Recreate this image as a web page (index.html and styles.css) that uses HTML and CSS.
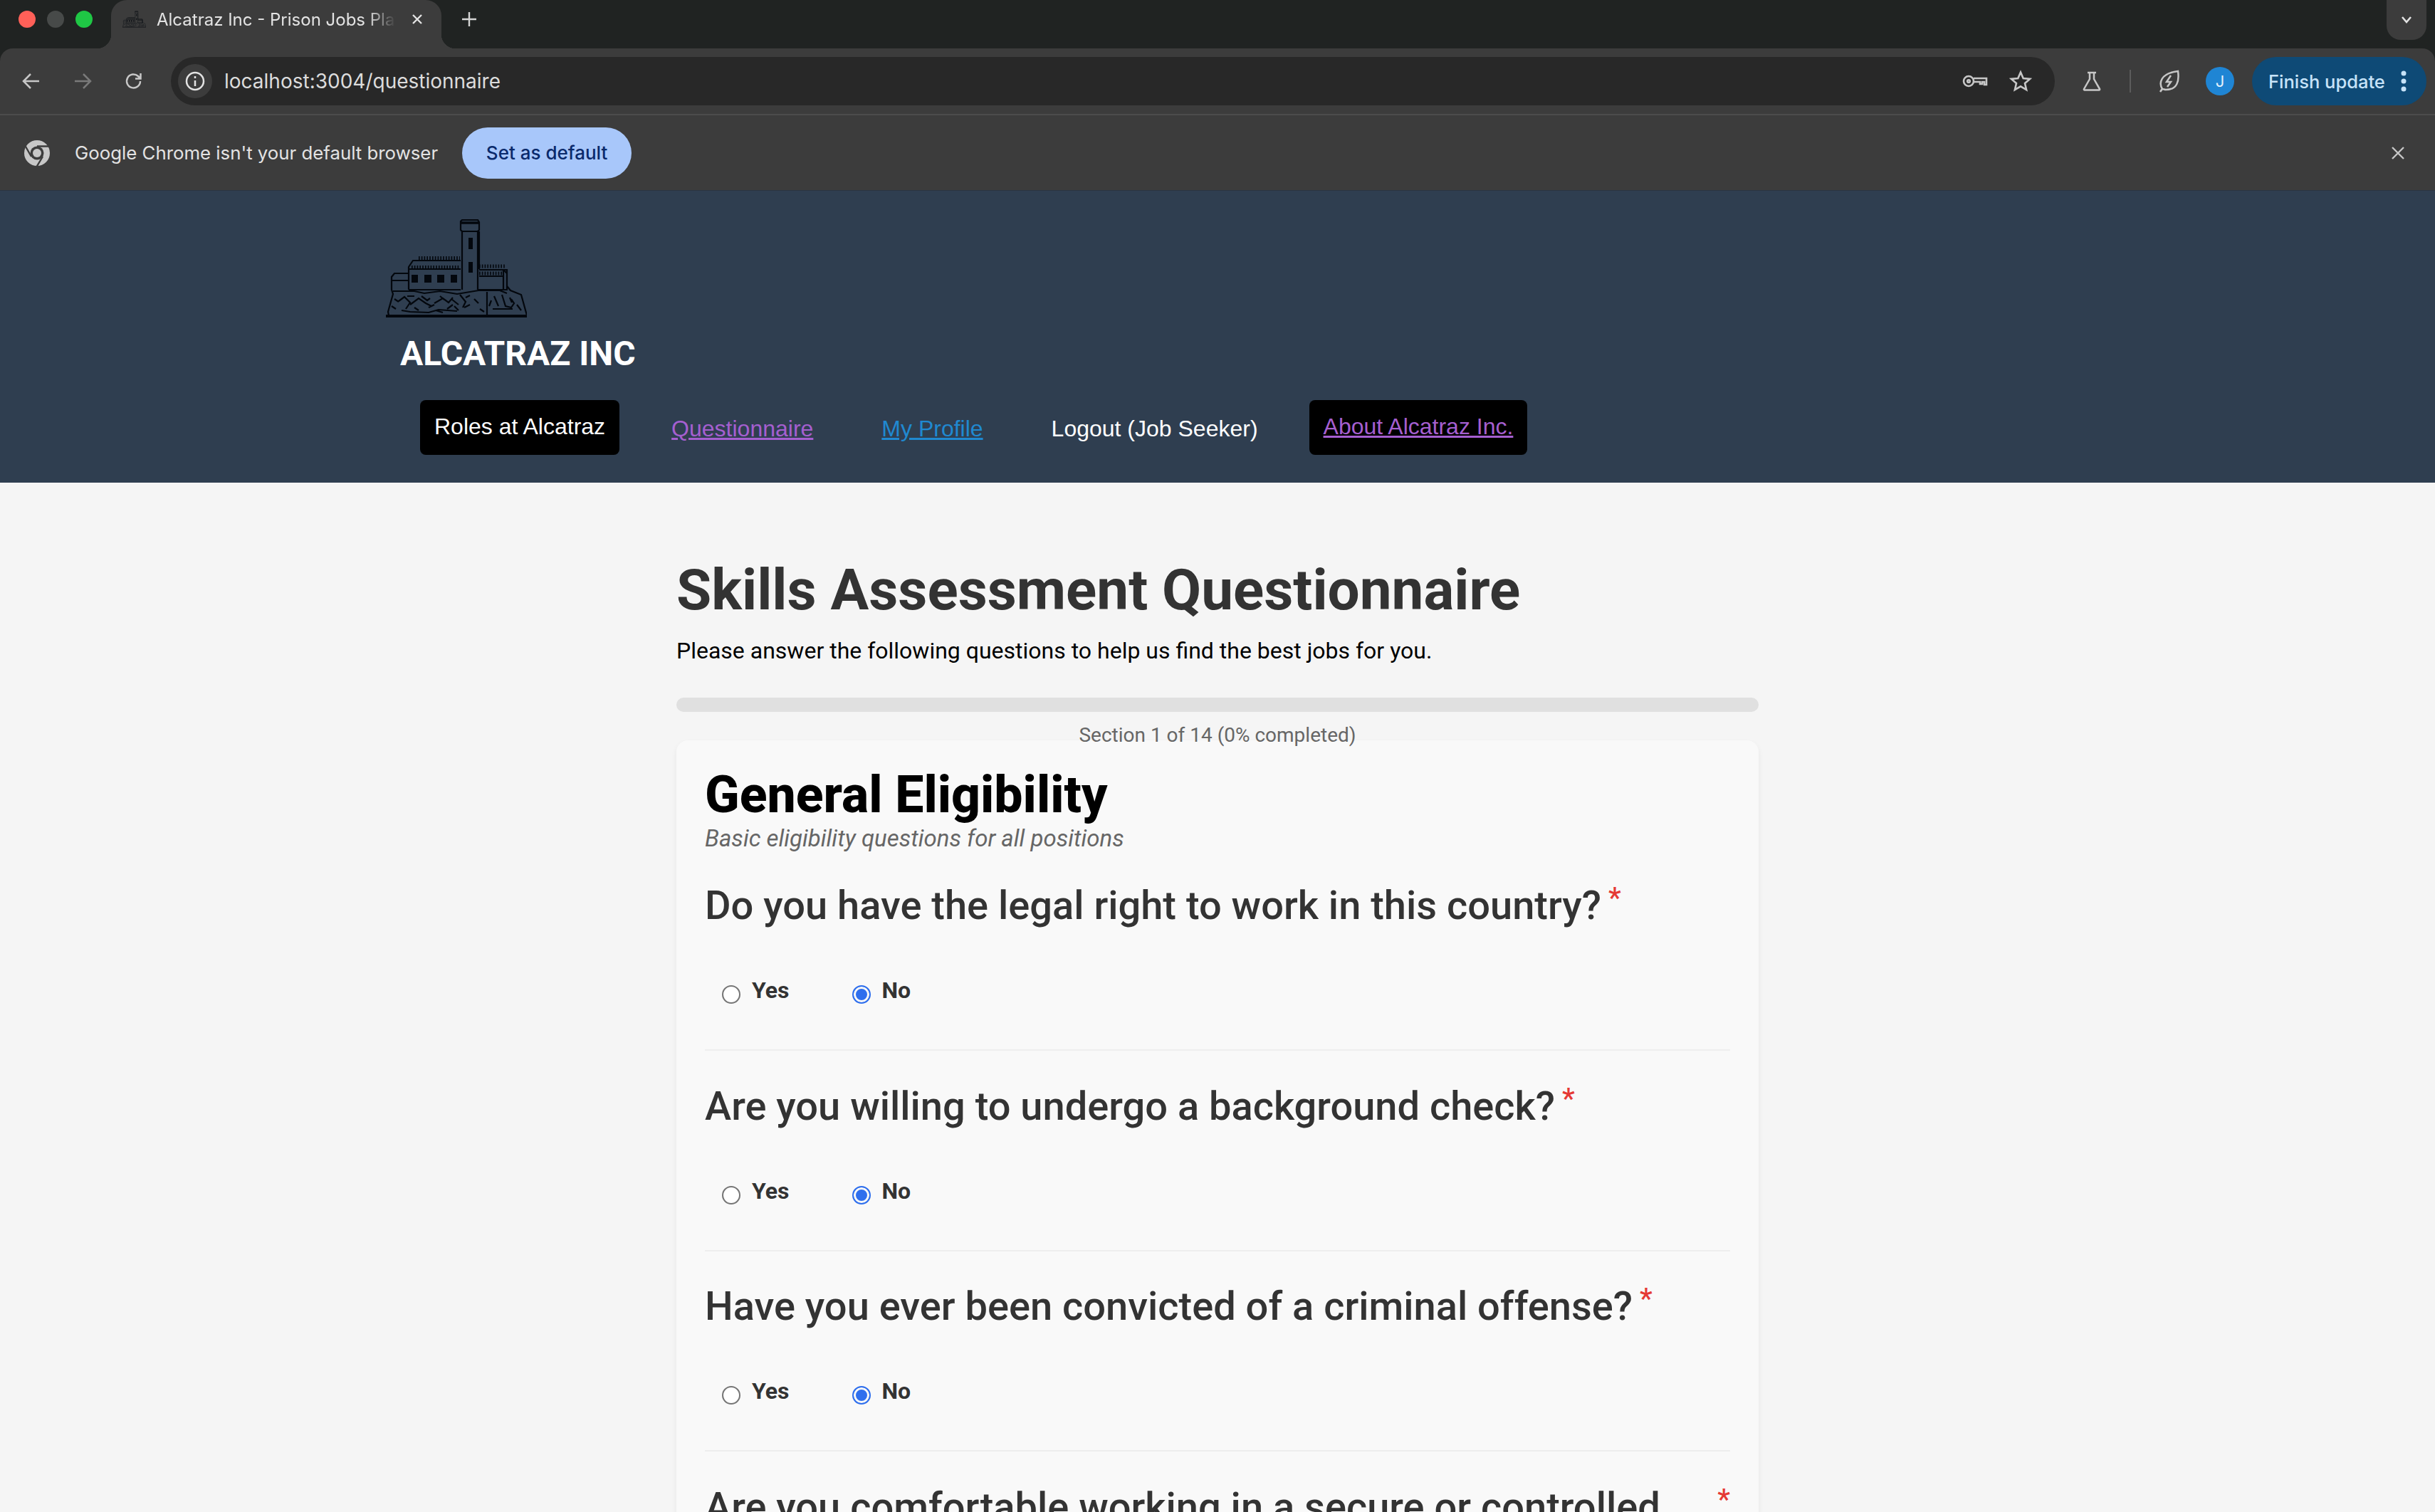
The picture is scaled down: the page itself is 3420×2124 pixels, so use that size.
FILE: index.html
```html
<!DOCTYPE html>
<html lang="en">
  <head>
    <meta charset="UTF-8" />
    <title>Alcatraz Inc - Prison Jobs Platform</title>
    <link rel="stylesheet" href="styles.css">
  </head>
  <body>
    <svg class="defs" width="0" height="0">
      <symbol id="fort" viewBox="0 0 198 138">
        <g fill="none" stroke="#03070d" stroke-width="2.200">
          <path d="M107 1h22l2 3v11l-2 2h-22l-2-2V3z" />
          <path d="M105 5h26" stroke-width="3.500" />
          <path d="M107 17v82M129 17v82M131 17v53" />
          <path d="M32 99V67l6-9h67M32 70h73" />
          <path d="M46 55h58M36 68h68" stroke-width="6" stroke-dasharray="1.600 2.200" />
          <path d="M32 99h73" />
          <path d="M8 99V81l4-5h20M8 86h24" />
          <path d="M131 71h39v28h-41M165 71l5 5v23M131 80h34M165 72v27" />
          <path d="M131 66h38M131 76h32" stroke-width="5" stroke-dasharray="1.600 2.200" />
          <path d="M8 99l2 6-7 25 1 5M170 94l5 6 15 6 8 29" />
          <path d="M10 101h30l14 3 22-3 24 4 30-5h30l10 4" />
          <path d="M142 102v33M18 115l8-6 8 8-6 9M34 120l12-9 10 7 8 4M50 108l8 6 4-3M68 118l12-7 8 6 6-7M92 112l10 8M104 106l8 10-4 8M118 120l-8 4M152 108l6 14M163 106l5 16 8 2 4-6-4-6M150 126h28M22 128l12 2 26 1 14-4 26 2M184 120l6 8M8 122l6 4M124 112l6 6M30 108h10M60 124l8-4M76 108l6 5M86 126l8-6M12 112l6 4M40 124l6 4M96 122l6 6M112 110l6-3M132 126l6 4M148 114l-3 8M174 110l3 7M70 128l10 3" />
          <path d="M0 136h198" stroke-width="3.800" />
        </g>
        <g fill="#03070d">
          <rect x="116" y="26" width="6" height="16" />
          <rect x="116" y="60" width="6" height="15" />
          <rect x="36" y="78" width="9" height="11" />
          <rect x="54" y="78" width="10" height="11" />
          <rect x="72" y="78" width="10" height="11" />
          <rect x="91" y="78" width="9" height="11" />
        </g>
      </symbol>
    </svg>

    <div class="browser">
      <!-- Browser tab strip -->
      <div class="tabstrip">
        <div class="lights">
          <span class="light light-red"></span>
          <span class="light light-off"></span>
          <span class="light light-green"></span>
        </div>
        <div class="tab">
          <svg class="favicon" width="33" height="30"><use href="#fort" /></svg>
          <span class="tab-title">Alcatraz Inc - Prison Jobs Platform</span>
          <svg class="tab-close" width="16" height="16" viewBox="0 0 16 16"><path d="M2 2l12 12M14 2L2 14" /></svg>
        </div>
        <svg class="new-tab" width="22" height="22" viewBox="0 0 22 22"><path d="M11 1v20M1 11h20" /></svg>
        <div class="tab-search">
          <svg width="16" height="12" viewBox="0 0 16 12"><path d="M2 2l6 7 6-7" /></svg>
        </div>
      </div>

      <!-- Toolbar -->
      <div class="toolbar">
        <svg class="tool-icon first-icon" width="28" height="28" viewBox="0 0 28 28"><path d="M25 14H5M13 4L3 14l10 10" /></svg>
        <svg class="tool-icon tool-dim" width="28" height="28" viewBox="0 0 28 28"><path d="M3 14h20M15 4l10 10-10 10" /></svg>
        <svg class="tool-icon" width="28" height="28" viewBox="0 0 28 28"><path d="M23 14a9.500 9.500 0 1 1-3-7l3 3M23.500 3v7.500H16" /></svg>
        <div class="omnibox">
          <span class="site-info">
            <svg width="30" height="30" viewBox="0 0 30 30"><circle cx="15" cy="15" r="12" /><path d="M15 14v8M15 8v3" /></svg>
          </span>
          <span class="url">localhost:3004/questionnaire</span>
          <svg class="omni-icon" width="36" height="22" viewBox="0 0 36 22"><circle cx="9" cy="11" r="7" /><circle cx="9" cy="11" r="1.800" /><path d="M16 7h18v9h-3v-4h-3v3h-3v-3h-9" /></svg>
          <svg class="omni-icon star" width="32" height="32" viewBox="0 0 32 32"><path d="M16 3.500l3.700 8.600 9.300.8-7 6.100 2.100 9.100-8.100-4.800-8.100 4.800 2.100-9.100-7-6.100 9.300-.8z" /></svg>
        </div>
        <svg class="tool-icon flask" width="30" height="30" viewBox="0 0 30 30"><path d="M9 3h12M12 3v9L4 26a1 1 0 0 0 1 1.500h20a1 1 0 0 0 1-1.500l-8-14V3" /></svg>
        <span class="tool-sep"></span>
        <svg class="tool-icon leaf" width="32" height="34" viewBox="0 0 32 34"><path d="M4 32c2-3 3-4 3-4-5-8-3-22 22-25 2 14-1 26-17 26-2 0-3-1-5-1" /><path d="M19 9l-6 9h6l-5 7" /></svg>
        <span class="avatar">J</span>
        <div class="update-btn">
          <span>Finish update</span>
          <svg width="8" height="30" viewBox="0 0 8 30"><circle cx="4" cy="4" r="3.500" /><circle cx="4" cy="15" r="3.500" /><circle cx="4" cy="26" r="3.500" /></svg>
        </div>
      </div>

      <!-- Default browser infobar -->
      <div class="infobar">
        <svg class="chrome-logo" width="38" height="38" viewBox="0 0 38 38">
          <circle cx="19" cy="19" r="18" fill="#c7c7c7" />
          <circle cx="19" cy="19" r="9.500" fill="#3c3c3c" />
          <circle cx="19" cy="19" r="6" fill="#c7c7c7" />
          <path d="M19 9.500h17M11 24L2.500 9M27 24l-8.500 14" fill="none" stroke="#3c3c3c" stroke-width="2.400" />
        </svg>
        <span class="infobar-text">Google Chrome isn't your default browser</span>
        <button class="default-btn">Set as default</button>
        <svg class="infobar-close" width="20" height="20" viewBox="0 0 20 20"><path d="M2 2l16 16M18 2L2 18" /></svg>
      </div>
    </div>

    <!-- Site header -->
    <header class="site-header">
      <svg class="logo" width="198" height="138"><use href="#fort" /></svg>
      <h2 class="brand">ALCATRAZ INC</h2>
      <nav class="site-nav">
        <a class="nav-btn nav-plain-text" href="#">Roles at Alcatraz</a>
        <a class="nav-link nav-purple" href="#">Questionnaire</a>
        <a class="nav-link nav-blue" href="#">My Profile</a>
        <span class="nav-logout">Logout (Job Seeker)</span>
        <a class="nav-btn nav-about" href="#">About Alcatraz Inc.</a>
      </nav>
    </header>

    <main class="content">
      <h1>Skills Assessment Questionnaire</h1>
      <p class="intro">Please answer the following questions to help us find the best jobs for you.</p>
      <div class="progress"></div>
      <p class="progress-text">Section 1 of 14 (0% completed)</p>

      <section class="card">
        <h2 class="section-title">General Eligibility</h2>
        <p class="section-sub">Basic eligibility questions for all positions</p>

        <div class="question">
          <div class="question-label"><span>Do you have the legal right to work in this country?</span><span class="required">*</span></div>
          <div class="options">
            <label class="option"><input type="radio" name="q1" />Yes</label>
            <label class="option"><input type="radio" name="q1" checked />No</label>
          </div>
        </div>

        <div class="question">
          <div class="question-label"><span>Are you willing to undergo a background check?</span><span class="required">*</span></div>
          <div class="options">
            <label class="option"><input type="radio" name="q2" />Yes</label>
            <label class="option"><input type="radio" name="q2" checked />No</label>
          </div>
        </div>

        <div class="question">
          <div class="question-label"><span>Have you ever been convicted of a criminal offense?</span><span class="required">*</span></div>
          <div class="options">
            <label class="option"><input type="radio" name="q3" />Yes</label>
            <label class="option"><input type="radio" name="q3" checked />No</label>
          </div>
        </div>

        <div class="question">
          <div class="question-label"><span>Are you comfortable working in a secure or controlled environment?</span><span class="required">*</span></div>
          <div class="options">
            <label class="option"><input type="radio" name="q4" />Yes</label>
            <label class="option"><input type="radio" name="q4" />No</label>
          </div>
        </div>
      </section>
    </main>
  </body>
</html>
```

FILE: styles.css
```css
/* Page */
html,
body {
  margin: 0;
  height: 2124px;
  overflow: hidden;
}

body {
  background-color: #f5f5f5;
  font-family: Roboto, Arial, sans-serif;
}

.defs {
  position: absolute;
}

.browser {
  background-color: #202322;
}

/* Tab strip */
.tabstrip {
  height: 68px;
  display: flex;
  align-items: flex-start;
}

.lights {
  display: flex;
  gap: 16px;
  padding: 15px 0 0 26px;
}

.light {
  width: 24px;
  height: 24px;
  border-radius: 50%;
}

.light-red {
  background-color: #ff6058;
}

.light-off {
  background-color: #474a49;
}

.light-green {
  background-color: #1fc745;
}

.tab {
  position: relative;
  width: 464px;
  height: 68px;
  margin-left: 26px;
  box-sizing: border-box;
  padding: 0 22px 14px 16px;
  display: flex;
  align-items: center;
  background-color: #3c3c3c;
  border-radius: 22px 22px 0 0;
}

/* little flares at the bottom of the active tab */
.tab::before,
.tab::after {
  content: "";
  position: absolute;
  bottom: 0;
  width: 20px;
  height: 20px;
}

.tab::before {
  left: -20px;
  background: radial-gradient(circle at 0 0, transparent 20px, #3c3c3c 20.5px);
}

.tab::after {
  right: -20px;
  background: radial-gradient(circle at 100% 0, transparent 20px, #3c3c3c 20.5px);
}

.favicon {
  flex-shrink: 0;
}

.tab-title {
  width: 336px;
  margin-left: 15px;
  white-space: nowrap;
  overflow: hidden;
  color: #e3e3e3;
  font: 400 24px Inter, Roboto, sans-serif;
  -webkit-mask-image: linear-gradient(to right, #000 88%, transparent 100%);
  mask-image: linear-gradient(to right, #000 88%, transparent 100%);
}

.tab-close {
  margin-left: 22px;
  flex-shrink: 0;
  fill: none;
  stroke: #e3e3e3;
  stroke-width: 2.400;
}

.new-tab {
  margin: 16px 0 0 28px;
  fill: none;
  stroke: #d5d5d5;
  stroke-width: 2.400;
}

.tab-search {
  width: 56px;
  height: 56px;
  margin-left: auto;
  margin-right: 12px;
  display: flex;
  align-items: center;
  justify-content: center;
  background-color: #3c3c3c;
  border-radius: 0 0 20px 20px;
}

.tab-search svg {
  fill: none;
  stroke: #e3e3e3;
  stroke-width: 2.600;
}

/* Toolbar */
.toolbar {
  height: 92px;
  box-sizing: border-box;
  padding: 12px 12px 12px 0;
  display: flex;
  align-items: flex-start;
  background-color: #3c3c3c;
  border-radius: 18px 18px 0 0;
}

.tool-icon {
  flex-shrink: 0;
  margin-top: 20px;
  margin-left: 44px;
  fill: none;
  stroke: #c7c7c7;
  stroke-width: 2.500;
}

.first-icon {
  margin-left: 30px;
}

.tool-dim {
  stroke: #7a7a7a;
}

.omnibox {
  width: 2646px;
  height: 68px;
  margin-left: 38px;
  box-sizing: border-box;
  padding-left: 10px;
  display: flex;
  align-items: center;
  flex-shrink: 0;
  background-color: #282828;
  border-radius: 34px;
}

.site-info {
  width: 48px;
  height: 48px;
  display: flex;
  align-items: center;
  justify-content: center;
  background-color: #3c3c3c;
  border-radius: 50%;
}

.site-info svg {
  fill: none;
  stroke: #e3e3e3;
  stroke-width: 2.500;
}

.url {
  margin-left: 17px;
  color: #dcdcdc;
  font: 400 28px Inter, Roboto, sans-serif;
}

.omni-icon {
  margin-left: auto;
  fill: none;
  stroke: #c7c7c7;
  stroke-width: 2.600;
}

.omni-icon.star {
  margin-left: 30px;
  margin-right: 32px;
}

.flask {
  margin-left: 37px;
  margin-top: 19px;
}

.tool-sep {
  width: 3px;
  height: 32px;
  margin: 18px 0 0 38px;
  background-color: #5c5c5c;
}

.leaf {
  margin-left: 37px;
  margin-top: 17px;
}

.avatar {
  width: 40px;
  height: 40px;
  margin: 14px 0 0 36px;
  flex-shrink: 0;
  border-radius: 50%;
  background-color: #1f85d4;
  color: #e6f2fb;
  font: 400 22px/40px Inter, Roboto, sans-serif;
  text-align: center;
}

.update-btn {
  width: 245px;
  height: 68px;
  margin-left: 25px;
  box-sizing: border-box;
  padding: 0 28px 0 23px;
  display: flex;
  align-items: center;
  justify-content: space-between;
  flex-shrink: 0;
  background-color: #0e4a76;
  border-radius: 34px;
  color: #c7e3f8;
  font: 500 25.500px Inter, Roboto, sans-serif;
}

.update-btn svg {
  fill: #c7e3f8;
}

/* Infobar */
.infobar {
  height: 108px;
  box-sizing: border-box;
  padding-left: 33px;
  padding-right: 42px;
  display: flex;
  align-items: center;
  background-color: #3c3c3c;
  border-top: 2px solid #4c4c4c;
  border-bottom: 1px solid #2b3442;
}

.infobar-text {
  margin-left: 34px;
  color: #e3e3e3;
  font: 400 25.800px Inter, Roboto, sans-serif;
}

.default-btn {
  width: 238px;
  height: 72px;
  margin-left: 34px;
  padding: 0;
  border: 0;
  border-radius: 36px;
  background-color: #a8c7fa;
  color: #0a2a6b;
  font: 500 26px Inter, Roboto, sans-serif;
}

.infobar-close {
  margin-left: auto;
  fill: none;
  stroke: #c7c7c7;
  stroke-width: 2.400;
}

/* Site header */
.site-header {
  height: 410px;
  box-sizing: border-box;
  padding: 40px 0 0 542px;
  background-color: #2f3e50;
}

.logo {
  display: block;
}

.brand {
  margin: 20px 0 0 20px;
  color: #fff;
  font-size: 48px;
  font-weight: 700;
  line-height: 62px;
}

.site-nav {
  margin: 34px 0 0 48px;
  display: flex;
  align-items: center;
  font-family: "Liberation Sans", Arial, sans-serif;
  font-size: 32px;
}

.nav-btn {
  padding: 0 20px;
  height: 77px;
  line-height: 75px;
  background-color: #000;
  border-radius: 8px;
}

.nav-plain-text {
  color: #fff;
  text-decoration: none;
}

.nav-about {
  color: #a55fd0;
}

.nav-link {
  margin-left: 73px;
  margin-right: 23px;
  padding-top: 4px;
}

.nav-purple {
  color: #a55fd0;
}

.nav-blue {
  color: #2089d0;
}

.nav-logout {
  margin-left: 73px;
  margin-right: 72px;
  padding-top: 4px;
  color: #fff;
}

/* Questionnaire */
.content {
  width: 1520px;
  margin: 0 auto;
  padding-top: 103px;
}

h1 {
  margin: 0 0 17px;
  color: #333;
  font-size: 80px;
  font-weight: 700;
  line-height: 96px;
}

.intro {
  margin: 0 0 46px;
  color: #000;
  font-size: 32px;
  line-height: 40px;
}

.progress {
  height: 20px;
  background-color: #e0e0e0;
  border-radius: 10px;
}

.progress-text {
  margin: 20px 0 -6px;
  color: #666;
  font-size: 28px;
  line-height: 26px;
  text-align: center;
}

.card {
  padding: 36px 40px 40px;
  background-color: #f9f9f9;
  border-radius: 16px;
  box-shadow: 0 4px 8px rgba(0, 0, 0, 0.06);
}

.section-title {
  margin: 0;
  color: #000;
  font-size: 71.500px;
  font-weight: 800;
  line-height: 82px;
}

.section-sub {
  margin: 0 0 40px;
  color: #666;
  font-size: 33px;
  font-style: italic;
  line-height: 40px;
}

.question {
  margin-bottom: 43.500px;
  padding-bottom: 64px;
  border-bottom: 2px solid #eee;
}

.question-label {
  display: flex;
  gap: 10px;
  color: #333;
  font-size: 56px;
  font-weight: 500;
  line-height: 68px;
}

.required {
  color: #e53935;
  font-size: 40px;
  line-height: 48px;
}

.options {
  margin-top: 66px;
  padding-left: 24px;
  display: flex;
  gap: 88px;
}

.option {
  display: flex;
  align-items: flex-start;
  color: #333;
  font-size: 32px;
  font-weight: 700;
  line-height: 38px;
}

.option input {
  appearance: none;
  flex-shrink: 0;
  box-sizing: border-box;
  width: 26px;
  height: 26px;
  margin: 12px 16px 0 0;
  border: 2px solid #767676;
  border-radius: 50%;
  background-color: #fff;
}

.option input:checked {
  border-color: #2f6fed;
  background-color: #2f6fed;
  box-shadow: inset 0 0 0 3px #f9f9f9;
}
```
